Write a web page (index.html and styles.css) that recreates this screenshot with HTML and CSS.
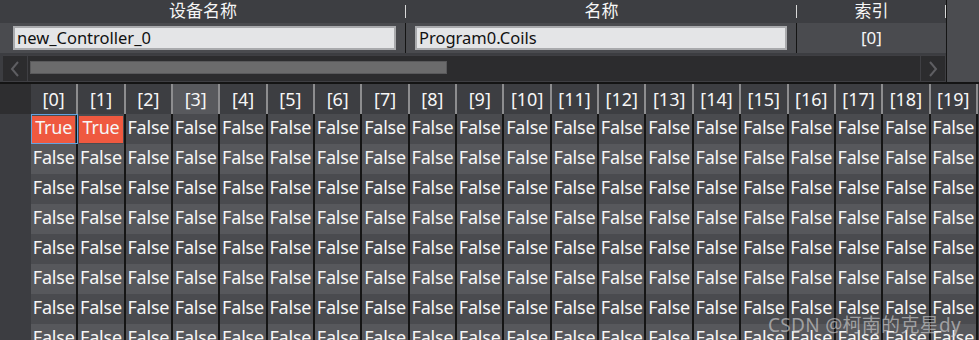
FILE: index.html
```html
<!DOCTYPE html>
<html lang="zh-CN">
<head>
    <meta charset="UTF-8">
    <meta name="viewport" content="width=device-width, initial-scale=1.0">
    <title>Program0.Coils</title>
    <link rel="stylesheet" href="styles.css">
</head>
<body>
    <div class="props">
        <div class="props-main">
            <div class="props-head">
                <div class="ph ph-dev">设备名称</div>
                <div class="ph ph-name">名称</div>
                <div class="ph ph-idx">索引</div>
            </div>
            <div class="props-row">
                <div class="pc pc-dev"><div class="field">new_Controller_0</div></div>
                <div class="pc pc-name"><div class="field">Program0.Coils</div></div>
                <div class="pc pc-idx">[0]</div>
            </div>
            <div class="hscroll">
                <div class="sb-btn">
                    <svg width="10" height="16" viewBox="0 0 10 16"><path d="M8 1 L2 8 L8 15" fill="none" stroke="#5e5e62" stroke-width="2"/></svg>
                </div>
                <div class="sb-track"><div class="sb-thumb"></div></div>
                <div class="sb-btn">
                    <svg width="10" height="16" viewBox="0 0 10 16"><path d="M2 1 L8 8 L2 15" fill="none" stroke="#5e5e62" stroke-width="2"/></svg>
                </div>
            </div>
        </div>
        <div class="props-side"></div>
    </div>

    <div class="grid" id="grid"></div>

    <div class="watermark">CSDN @柯南的克星dy</div>

    <script>
        const cols = 20;
        const rows = 8;
        const grid = document.getElementById('grid');
        let html = '<div class="corner"></div>';

        for (let c = 0; c < cols; c++) {
            html += `<div class="col-head${c === 3 ? ' hover' : ''}">[${c}]</div>`;
        }

        for (let r = 0; r < rows; r++) {
            const stripe = r % 2 ? 'even' : 'odd';
            html += `<div class="row-head"></div>`;
            for (let c = 0; c < cols; c++) {
                const on = r === 0 && c < 2;
                const sel = r === 0 && c === 0;
                html += `<div class="cell ${stripe}${sel ? ' selected' : ''}"><span class="val${on ? ' on' : ''}">${on ? 'True' : 'False'}</span></div>`;
            }
        }

        grid.innerHTML = html;
    </script>
</body>
</html>
```

FILE: styles.css
```css
body, html {
    margin: 0;
    padding: 0;
    width: 979px;
    height: 340px;
    overflow: hidden;
    background: #3c3d41;
    font-family: "Noto Sans", "Noto Sans CJK SC", sans-serif;
    color: #f6f6f6;
}
.props {
    display: flex;
    height: 82px;
    border-bottom: 2px solid #141414;
}
.props-main {
    width: 946px;
    display: flex;
    flex-direction: column;
    border-right: 1px solid #151515;
}
.props-side {
    flex: 1;
    background: #4b4c50;
}
.props-head {
    display: flex;
    height: 24px;
    background: #3d3e42;
}
.ph {
    position: relative;
    text-align: center;
    font-size: 17px;
    line-height: 22px;
}
.ph::after {
    content: "";
    position: absolute;
    right: 0;
    top: 5px;
    width: 1px;
    height: 13px;
    background: #d8d8d8;
}
.ph-dev { width: 406px; }
.ph-name { width: 391px; }
.ph-idx { width: 149px; }
.props-row {
    display: flex;
    height: 30px;
    background: #4a4b4f;
}
.pc {
    box-sizing: border-box;
    padding: 3px 9px;
}
.pc-dev {
    width: 406px;
    padding-left: 13px;
    border-right: 1px solid #141414;
}
.pc-name {
    width: 391px;
    border-right: 1px solid #141414;
}
.pc-idx {
    width: 149px;
    text-align: center;
    font-size: 17px;
    line-height: 24px;
}
.field {
    height: 24px;
    box-sizing: border-box;
    background: #e4e5e7;
    border: 2px solid #a9aaad;
    color: #111;
    font-size: 16.5px;
    line-height: 19px;
    padding-left: 2px;
}
.hscroll {
    display: flex;
    height: 26px;
    margin: 2px 0 0 3px;
    background: #2c2c2e;
    border: 1px solid #3f3f43;
    border-left: none;
}
.sb-btn {
    width: 24px;
    display: flex;
    align-items: center;
    justify-content: center;
    border-right: 1px solid #3f3f43;
}
.sb-btn:last-child {
    border-right: none;
    border-left: 1px solid #3f3f43;
}
.sb-track {
    flex: 1;
    padding: 5px 2px;
}
.sb-thumb {
    width: 417px;
    height: 13px;
    box-sizing: border-box;
    background: #6b6b6c;
    border: 1px solid #59595b;
}
.grid {
    display: grid;
    grid-template-columns: 31px repeat(20, 47.35px);
    grid-auto-rows: 30px;
}
.corner {
    background: #2e2e30;
}
.col-head {
    background: #3d3e42;
    border-right: 2px solid #8d8d8f;
    text-align: center;
    font-size: 18px;
    line-height: 30px;
}
.col-head.hover {
    background: #58595d;
}
.row-head {
    background: #3c3d41;
}
.cell {
    box-sizing: border-box;
    padding: 2px 1px 1px 1px;
    border-right: 2px solid #151515;
    font-size: 18px;
    line-height: 23px;
    text-align: center;
}
.cell.odd { background: #4a4b4f; }
.cell.even { background: #57585c; }
.cell.selected {
    outline: 1px solid #63a2df;
    outline-offset: -1px;
}
.val {
    display: block;
    height: 27px;
    white-space: nowrap;
    letter-spacing: -0.2px;
}
.val.on {
    background: #ef5940;
}
.watermark {
    position: absolute;
    right: 18px;
    bottom: 3px;
    font-size: 19px;
    line-height: 24px;
    color: rgba(215, 215, 215, 0.6);
    letter-spacing: 0.3px;
}
```
